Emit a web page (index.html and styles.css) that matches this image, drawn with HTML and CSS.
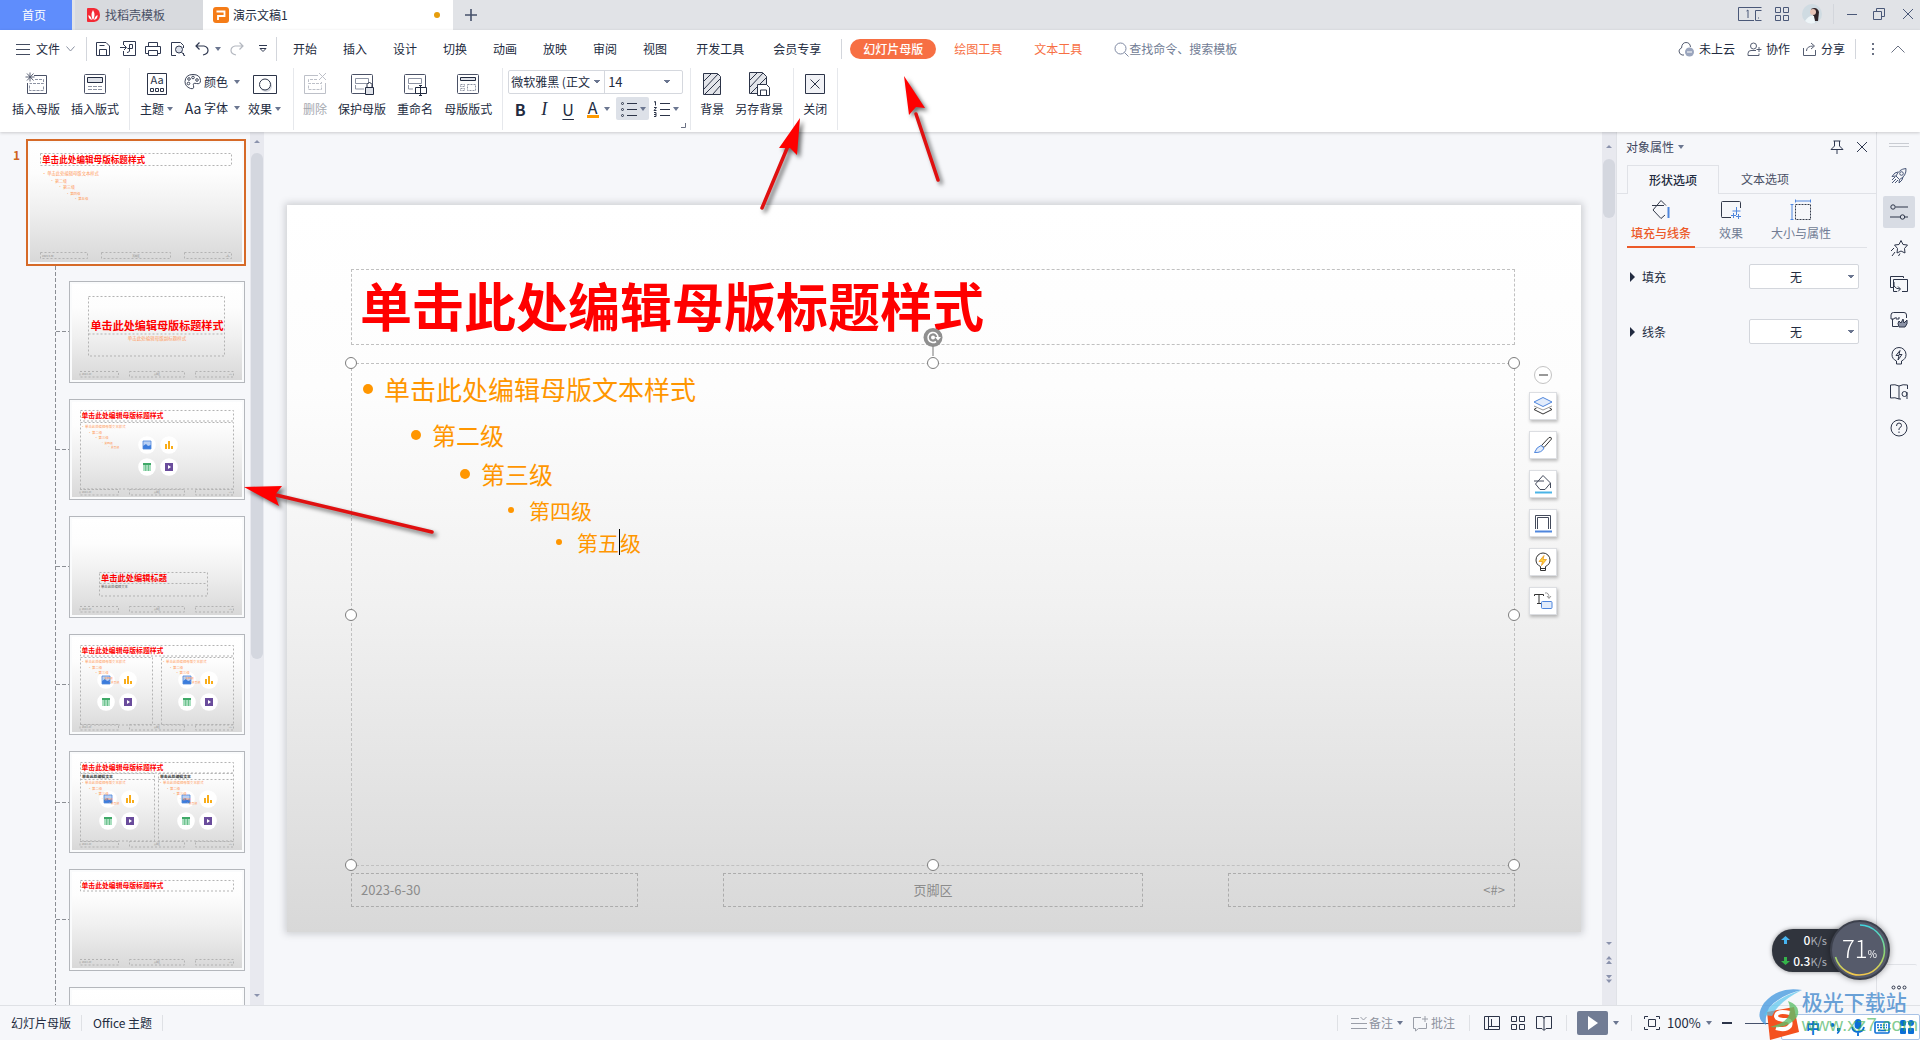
FILE: index.html
```html
<!DOCTYPE html>
<html lang="zh-CN">
<head>
<meta charset="utf-8">
<title>演示文稿1</title>
<link rel="stylesheet" href="styles.css">
</head>
<body>
<svg class="sprite" aria-hidden="true">
  <defs>
    <linearGradient id="paper" x1="0" y1="0" x2="0" y2="1">
      <stop offset="0" stop-color="#fff"/><stop offset=".25" stop-color="#fdfdfd"/><stop offset=".55" stop-color="#f0f0f0"/><stop offset="1" stop-color="#d8d8d8"/>
    </linearGradient>
    <linearGradient id="ring" x1="0" y1="0" x2="0" y2="1">
      <stop offset="0" stop-color="#3fd6e0"/><stop offset=".6" stop-color="#93d76f"/><stop offset="1" stop-color="#f5c84c"/>
    </linearGradient>
    <symbol id="caret" viewBox="0 0 6 4"><path d="M0 0h6L3 4z" fill="#6b7690"/></symbol>
    <symbol id="media" viewBox="0 0 40 40">
      <g fill="#fff"><circle cx="9" cy="9" r="8.800"/><circle cx="31" cy="9" r="8.800"/><circle cx="9" cy="31" r="8.800"/><circle cx="31" cy="31" r="8.800"/></g>
      <path d="M5 5h8v8H5z" fill="#b9d0f3"/><path d="M5 10l3-2 2 2 3-1v4H5z" fill="#3b7cdc"/><path d="M5 5h8v8H5z" fill="none" stroke="#4c86dd" stroke-width=".8"/>
      <path d="M27 8h2v5h-2zM30 5h2v8h-2zM33 10h2v3h-2z" fill="#f9ad18"/>
      <path d="M5 27h8v8H5z" fill="#a9dfbf"/><path d="M5 27h8v2H5zM7.500 29h.6v6h-.6zM10.200 29h.6v6h-.6z" fill="#3fa968"/>
      <path d="M27 27h8v8h-8z" fill="#6a4c9c"/><path d="M30 29l3 2-3 2z" fill="#fff"/>
    </symbol>
    <symbol id="mini-foot" viewBox="0 0 170 96">
      <g class="dash"><path d="M8 87.500h38.500V93H8zM57.500 87.500h55V93h-55zM123.500 87.500h38V93h-38z"/></g>
      <g font-size="2" fill="#888"><text x="10" y="91">2023-6-30</text><text x="85" y="91" text-anchor="middle">页脚区</text><text x="160" y="91" text-anchor="end">&lt;#&gt;</text></g>
    </symbol>
    <symbol id="mini-title" viewBox="0 0 170 96">
      <path class="dash" d="M8.500 8.500h153V19h-153z"/>
      <text class="red" x="9.500" y="16.500" font-size="6.850">单击此处编辑母版标题样式</text>
    </symbol>
    <symbol id="mini-list" viewBox="0 0 80 40">
      <g class="org" font-size="3.400"><text x="1" y="6">• 单击此处编辑母版文本样式</text><text x="8" y="12">• 第二级</text><text x="14.500" y="17">• 第三级</text><text x="21" y="22" font-size="2.800">• 第四级</text><text x="27.500" y="26.500" font-size="2.800">• 第五级</text></g>
    </symbol>
    <symbol id="i-layout" viewBox="0 0 24 24"><rect x="1.500" y="2.500" width="21" height="19" rx="1" fill="#fff" stroke="#4a5166"/></symbol>
  </defs>
</svg>

<header class="tabs">
  <a class="tab tab-home" href="#">首页</a>
  <a class="tab tab-docer" href="#">
    <svg width="14" height="18" viewBox="0 0 14 18"><path d="M1 3q0-1 1-1h6q6 1 6 7t-6 7H2q-1 0-1-1z" fill="#f32a35"/><path d="M7 14Q4 9 7 4q3 5 0 10zM6 14Q2 13 2.500 9 5 10 6 14zM8 14q4-1 3.500-5Q9 10 8 14z" fill="#fff"/></svg>
    找稻壳模板</a>
  <a class="tab tab-doc" href="#">
    <svg width="16" height="16" viewBox="0 0 16 16"><rect width="16" height="16" rx="3" fill="#f57c17"/><path d="M3.500 4.500h8v4.500H5V13" fill="none" stroke="#fff" stroke-width="1.800"/></svg>
    <span>演示文稿1</span><i class="dirty"></i></a>
  <button class="plus" aria-label="新建"><svg width="12" height="12" viewBox="0 0 12 12"><path d="M6 0v12M0 6h12" stroke="#46516b" stroke-width="1.600"/></svg></button>
  <div class="win">
    <svg width="24" height="15" viewBox="0 0 24 15" fill="none" stroke="#4a5878"><path d="M16 13.500H.5v-13h23M8.500 4l1.500-1v8"/><path d="M23.500 3.500h-6v10h6M20 11h1"/></svg>
    <svg width="14" height="14" viewBox="0 0 14 14" fill="none" stroke="#4a5878"><path d="M.5.500h5v5h-5zM8.500.500h5v5h-5zM.5 8.500h5v5h-5zM8.500 8.500h5v5h-5z"/></svg>
    <svg class="avatar" width="20" height="20" viewBox="0 0 20 20"><circle cx="10" cy="10" r="10" fill="#cfdbe2"/><path d="M9 5q6-3 8 3l-1 9h-3z" fill="#302428"/><circle cx="11" cy="8" r="3" fill="#e8c5b8"/><path d="M3 17q4-6 9-5l1 7q-6 2-10-2z" fill="#eef5f8"/></svg>
    <i class="vline"></i>
    <button aria-label="最小化"><svg width="12" height="12" viewBox="0 0 12 12"><path d="M1 6.500h10" stroke="#4a5878"/></svg></button>
    <button aria-label="还原"><svg width="12" height="12" viewBox="0 0 12 12" fill="none" stroke="#4a5878"><path d="M.5 3.500h8v8h-8zM3.500 3V.5h8v8H9"/></svg></button>
    <button aria-label="关闭"><svg width="12" height="12" viewBox="0 0 12 12"><path d="M1 1l10 10M11 1L1 11" stroke="#4a5878"/></svg></button>
  </div>
</header>

<div class="ribbon">
  <div class="menubar">
    <button class="file"><svg width="14" height="12" viewBox="0 0 14 12"><path d="M0 1.500h14M0 6.500h14M0 11.500h14" stroke="#444c60"/></svg>文件<svg class="chev" width="9" height="6" viewBox="0 0 9 6" fill="none" stroke="#8a90a0"><path d="M.5.500l4 4.500 4-4.500"/></svg></button>
    <div class="quick">
      <button aria-label="保存"><svg width="16" height="16" viewBox="0 0 16 16" fill="none" stroke="#2f3850"><path d="M1.500 1.500H11l3.500 3.500v9.500h-13zM4.500 14V8.500h7V14M4.500 4.500h5"/></svg></button>
      <button aria-label="输出为PDF"><svg width="16" height="16" viewBox="0 0 16 16" fill="none" stroke="#2f3850"><path d="M3.500 4V.5h12v14h-12V10M0 6.500h6M4 4l2.500 2.500L4 9M9.500 3.500v6.500q-.5 1.500-2.500 1.500M9.500 3.500h3v4h-5"/></svg></button>
      <button aria-label="打印"><svg width="16" height="16" viewBox="0 0 16 16" fill="none" stroke="#2f3850"><path d="M3.500 5V1.500h9V5M3.500 12.500h-3v-7h15v7h-3M3.500 9.500h9v5h-9z"/></svg></button>
      <button aria-label="打印预览"><svg width="16" height="16" viewBox="0 0 16 16" fill="none" stroke="#2f3850"><path d="M6 14.500H1.500v-13h9l3 3V7M13.500 12v2.500"/><circle cx="9" cy="8.500" r="3.500" fill="#dde1ea"/><path d="M11.500 11l3.500 4"/></svg></button>
      <button class="undo" aria-label="撤销"><svg width="14" height="14" viewBox="0 0 14 14" fill="none" stroke="#2f3850" stroke-width="1.200"><path d="M4.500.500L1 4l3.500 3.500M1 4h8q4 1 4 4.500T8 13"/></svg><svg width="6" height="4"><use href="#caret"/></svg></button>
      <button aria-label="恢复"><svg width="14" height="14" viewBox="0 0 14 14" fill="none" stroke="#b4b8c0" stroke-width="1.200"><path d="M9.500.500L13 4 9.500 7.500M13 4H5Q1 5 1 8.500T6 13"/></svg></button>
      <button class="more" aria-label="更多"><svg width="8" height="8" viewBox="0 0 8 8" fill="none" stroke="#2f3850"><path d="M0 .5h8M1 3.500h6L4 6.500z"/></svg></button>
    </div>
    <nav class="menus">
      <a href="#">开始</a><a href="#">插入</a><a href="#">设计</a><a href="#">切换</a><a href="#">动画</a><a href="#">放映</a><a href="#">审阅</a><a href="#">视图</a><a class="wide" href="#">开发工具</a><a class="wide" href="#">会员专享</a>
    </nav>
    <nav class="context"><a class="pill" href="#">幻灯片母版</a><a href="#">绘图工具</a><a href="#">文本工具</a></nav>
    <label class="search"><svg width="15" height="15" viewBox="0 0 15 15" fill="none" stroke="#7f8aa3"><circle cx="6.500" cy="6.500" r="5.500"/><path d="M10.500 10.500l4 4"/></svg><input type="text" placeholder="查找命令、搜索模板" aria-label="查找命令"></label>
    <div class="share">
      <button><svg width="17" height="16" viewBox="0 0 17 16"><path d="M6 14H4q-3-1-3-4 0-2 2.500-3Q4 1.500 8 1.500T12.500 6" fill="none" stroke="#565e72"/><circle cx="11.500" cy="11" r="4.500" fill="#9aa5bd"/><path d="M9 11h5" stroke="#fff"/></svg>未上云</button>
      <button><svg width="15" height="15" viewBox="0 0 15 15" fill="none" stroke="#565e72"><circle cx="6.500" cy="4" r="3"/><path d="M9 8.500H4q-3 0-3 3v2h11v-2M9.500 7.500h5M12 5v5"/></svg>协作</button>
      <button><svg width="15" height="15" viewBox="0 0 15 15" fill="none" stroke="#565e72"><path d="M1.500 6v7.500h12V8M4.500 9q0-5 7-5M9 1l3.500 3L9 7"/></svg>分享</button>
      <i class="vline"></i>
      <button aria-label="更多"><svg width="4" height="14" viewBox="0 0 4 14" fill="#6a7183"><path d="M1 1h2v2H1zM1 6h2v2H1zM1 11h2v2H1z"/></svg></button>
      <button class="fold" aria-label="收起"><svg width="14" height="8" viewBox="0 0 14 8" fill="none" stroke="#6a7183"><path d="M.5 7.500L7 1l6.500 6.500"/></svg></button>
    </div>
  </div>

  <div class="tools">
    <div class="group first">
      <button class="tool"><svg width="24" height="24" viewBox="0 0 24 24" fill="none" stroke="#4a5166"><path d="M10 3.500h12.500v18h-19V11"/><path d="M6 .5v9M1.500 5h9M3 1.500l6.500 7M9.500 1.500L3 8.500" stroke-width=".9"/><path d="M11 7.500h8.500v4h-14M5.500 13.500v5h14v-5" stroke-dasharray="3 1" stroke="#8d93a3"/></svg>插入母版</button>
      <button class="tool"><svg width="24" height="24" viewBox="0 0 24 24" fill="none" stroke="#4a5166"><use href="#i-layout"/><path d="M4.500 5.500h15v5h-15z" fill="#dfe2e9" stroke="#222b40"/><path d="M5 14.500h14M5 17.500h14" stroke-dasharray="4 1" stroke="#8d93a3"/></svg>插入版式</button>
    </div>
    <div class="group near">
      <button class="tool"><svg width="24" height="24" viewBox="0 0 24 24" fill="none" stroke="#2c3448"><path d="M2.500 1.500h19v21h-19zM5.500 16.500h3v3h-3zM10.500 16.500h3v3h-3zM15.500 16.500h3v3h-3z"/><text x="12" y="12" text-anchor="middle" font-size="11" fill="#2c3448" stroke="none">Aa</text></svg><span>主题<svg width="6" height="4"><use href="#caret"/></svg></span></button>
      <div class="pair">
        <button><svg width="18" height="18" viewBox="0 0 18 18" fill="none" stroke="#3c4458"><path d="M9 1.500q7 0 7.500 6 0 4-4 3t-3 2q1 4-3 3Q1 13.500 1 8.500q.5-7 8-7z"/><circle cx="5" cy="6" r="1.300"/><circle cx="9" cy="4.500" r="1.300"/><circle cx="13" cy="7" r="1.300"/><circle cx="4.500" cy="10.500" r="1.300"/></svg>颜色<svg width="6" height="4"><use href="#caret"/></svg></button>
        <button><b class="aa">Aa</b>字体<svg width="6" height="4"><use href="#caret"/></svg></button>
      </div>
      <button class="tool"><svg width="24" height="24" viewBox="0 0 24 24" fill="none" stroke="#2c3448"><path d="M.5 3.500h23v18H.5z"/><circle cx="13" cy="14" r="6" fill="#d5d8e0" stroke="none"/><circle cx="12" cy="12.500" r="5.500" fill="#fff"/></svg><span>效果<svg width="6" height="4"><use href="#caret"/></svg></span></button>
    </div>
    <div class="group">
      <button class="tool" disabled><svg width="24" height="24" viewBox="0 0 24 24" fill="none" stroke="#bdc0c8"><path d="M15 3.500H1.500v18h21V11M16 1l7 7M23 1l-7 7"/><path d="M14 7.500H5.500v4h13v-2M5.500 13.500v4h13v-4" stroke-dasharray="3 1"/></svg>删除</button>
      <button class="tool"><svg width="24" height="24" viewBox="0 0 24 24" fill="none" stroke="#4a5166"><use href="#i-layout"/><path d="M5.500 6.500h13v5h-13zM5.500 13v4H14" stroke="#8d93a3"/><path d="M15.500 15.500h8v7h-8z" fill="#dfe2e9" stroke="#222b40"/><path d="M17 15v-2.500q2.500-4 5 0V15" stroke="#222b40"/></svg>保护母版</button>
      <button class="tool"><svg width="24" height="24" viewBox="0 0 24 24" fill="none" stroke="#4a5166"><use href="#i-layout"/><path d="M5.500 6.500h13v5h-13zM5.500 13v4H10" stroke="#8d93a3"/><path d="M12.500 15.500h11v6h-11z" fill="#fff" stroke="#222b40"/><path d="M17.500 14v9M16 13.500h3M16 23.500h3" stroke="#222b40"/></svg>重命名</button>
      <button class="tool"><svg width="24" height="24" viewBox="0 0 24 24" fill="none" stroke="#4a5166"><use href="#i-layout"/><path d="M4.500 5.500h15v3h-15z" fill="#dfe2e9" stroke="#222b40"/><path d="M4.500 12.500h4v2h-4zM4.500 16.500h4v2h-4zM11.500 12.500h8v6h-8z" stroke="#8d93a3" stroke-dasharray="2 1"/></svg>母版版式</button>
    </div>
    <div class="group font">
      <div class="combo">
        <select class="family" aria-label="字体"><option>微软雅黑 (正文)</option></select>
        <select class="size" aria-label="字号"><option>14</option></select>
      </div>
      <div class="marks">
        <button class="bold" aria-label="加粗">B</button>
        <button class="ital" aria-label="倾斜">I</button>
        <button class="under" aria-label="下划线">U</button>
        <button class="color"><span>A</span><svg width="6" height="4"><use href="#caret"/></svg></button>
        <button class="list on" aria-label="项目符号"><svg width="18" height="18" viewBox="0 0 18 18" fill="none" stroke="#2c3448"><path d="M7 3.500h10M7 9.500h10M7 15.500h10"/><circle cx="2.500" cy="3.500" r="1"/><circle cx="2.500" cy="9.500" r="1"/><circle cx="2.500" cy="15.500" r="1"/></svg><svg width="6" height="4"><use href="#caret"/></svg></button>
        <button class="list" aria-label="编号"><svg width="18" height="18" viewBox="0 0 18 18" fill="none" stroke="#2c3448"><path d="M7 3.500h10M7 9.500h10M7 15.500h10M1 2l1.500-.5v4M1 7.500h2.500L1 10.500h2.500M1 12.500h2v4H1M1 14.500h2"/></svg><svg width="6" height="4"><use href="#caret"/></svg></button>
      </div>
      <svg class="corner" width="5" height="5" viewBox="0 0 5 5"><path d="M4.500 0v4.500H0" fill="none" stroke="#6a7183"/></svg>
    </div>
    <div class="group">
      <button class="tool"><svg width="20" height="24" viewBox="0 0 20 24" fill="none" stroke="#2c3448"><path d="M1.500 1.500h14l3 3v18h-17z" fill="#e3e5ea"/><path d="M2 9l7-7M2 17L16 2M3 22L18 7M11 22l7-8"/></svg>背景</button>
      <button class="tool"><svg width="24" height="24" viewBox="0 0 24 24" fill="none" stroke="#2c3448"><path d="M2.500.500h13l4 4v17h-17z" fill="#e3e5ea"/><path d="M3 8l7-7M3 15L16 1M4 21L19 6"/><path d="M10.500 12.500h9l3 3v8h-12z" fill="#fff"/><path d="M13.500 23v-5h6v5"/></svg>另存背景</button>
    </div>
    <div class="group">
      <button class="tool"><svg width="22" height="24" viewBox="0 0 22 24" fill="none" stroke="#2c3448"><path d="M1.500 2.500h19v19h-19z" fill="#f1f2f6"/><path d="M6.500 7.500l9 9M15.500 7.500l-9 9"/></svg>关闭</button>
    </div>
  </div>
</div>

<main class="work">
  <aside class="thumbs">
    <div class="master-row">
      <b class="num">1</b>
      <a class="thumb master" href="#"><svg viewBox="0 0 212 119">
        <rect width="212" height="119" fill="url(#paper)"/>
        <path class="dash" d="M10.500 10.500h191v12h-191zM10.500 109.500h47v6h-47zM71.500 109.500h69v6h-69zM154.500 109.500h47v6h-47z"/>
        <text class="red" x="12" y="19.500" font-size="8.600">单击此处编辑母版标题样式</text>
        <g class="org" font-size="4.300"><text x="12" y="32">• 单击此处编辑母版文本样式</text><text x="20" y="39.500" font-size="4">• 第二级</text><text x="28" y="45.500" font-size="4">• 第三级</text><text x="36" y="51.500" font-size="3.400">• 第四级</text><text x="44" y="57" font-size="3.400">• 第五级</text></g>
        <g font-size="2.500" fill="#888"><text x="12" y="113.500">2023-6-30</text><text x="106" y="113.500" text-anchor="middle">页脚区</text><text x="200" y="113.500" text-anchor="end">&lt;#&gt;</text></g>
      </svg></a>
    </div>
    <ol class="layouts">
      <li><a class="thumb" href="#"><svg viewBox="0 0 170 95.600"><rect width="170" height="96" fill="url(#paper)"/>
        <path class="dash" d="M16.500 12.500h136v59.500h-136zM16.500 50h136"/>
        <text class="red" x="85" y="46" font-size="11.100" text-anchor="middle">单击此处编辑母版标题样式</text>
        <text class="org" x="85" y="56.500" font-size="4.500" text-anchor="middle">单击此处编辑母版副标题样式</text>
        <use href="#mini-foot" width="170" height="96"/></svg></a></li>
      <li><a class="thumb" href="#"><svg viewBox="0 0 170 95.600"><rect width="170" height="96" fill="url(#paper)"/>
        <use href="#mini-title" width="170" height="96"/><path class="dash" d="M8.500 20.500h153V87h-153z"/>
        <use href="#mini-list" x="8" y="20" width="80" height="40"/><use href="#media" x="66" y="34" width="40" height="40"/>
        <use href="#mini-foot" width="170" height="96"/></svg></a></li>
      <li><a class="thumb" href="#"><svg viewBox="0 0 170 95.600"><rect width="170" height="96" fill="url(#paper)"/>
        <path class="dash" d="M27.500 53.500h108V77h-108zM27.500 64.500h108"/>
        <text class="red" x="29" y="61.800" font-size="8.250">单击此处编辑标题</text><text x="29" y="69" font-size="3.400" fill="#555">单击此处编辑文本</text>
        <use href="#mini-foot" width="170" height="96"/></svg></a></li>
      <li><a class="thumb" href="#"><svg viewBox="0 0 170 95.600"><rect width="170" height="96" fill="url(#paper)"/>
        <use href="#mini-title" width="170" height="96"/><path class="dash" d="M8.500 20.500h72V88h-72zM89.500 20.500h72V88h-72z"/>
        <use href="#media" x="25" y="34" width="40" height="40"/><use href="#media" x="106" y="34" width="40" height="40"/>
        <use href="#mini-list" x="8" y="20" width="80" height="40"/><use href="#mini-list" x="89" y="20" width="80" height="40"/>
        <use href="#mini-foot" width="170" height="96"/></svg></a></li>
      <li><a class="thumb" href="#"><svg viewBox="0 0 170 95.600"><rect width="170" height="96" fill="url(#paper)"/>
        <use href="#mini-title" width="170" height="96"/><path class="dash" d="M8.500 19.500h74V87h-74zM86.500 19.500h75V87h-75zM8.500 25.500h74M86.500 25.500h75"/>
        <use href="#media" x="27" y="36" width="40" height="40"/><use href="#media" x="105" y="36" width="40" height="40"/>
        <g font-size="3.900" font-weight="700" fill="#333"><text x="10" y="24">单击此处编辑文本</text><text x="88" y="24">单击此处编辑文本</text></g>
        <use href="#mini-list" x="8" y="24" width="80" height="40"/><use href="#mini-list" x="86" y="24" width="80" height="40"/>
        <use href="#mini-foot" width="170" height="96"/></svg></a></li>
      <li><a class="thumb" href="#"><svg viewBox="0 0 170 95.600"><rect width="170" height="96" fill="url(#paper)"/>
        <use href="#mini-title" width="170" height="96"/><use href="#mini-foot" width="170" height="96"/></svg></a></li>
      <li><a class="thumb" href="#"><svg viewBox="0 0 170 95.600"><rect width="170" height="96" fill="url(#paper)"/><use href="#mini-foot" width="170" height="96"/></svg></a></li>
    </ol>
  </aside>
  <div class="bar bar-left"><i class="up"></i><i class="grip"></i><i class="down"></i></div>

  <section class="canvas">
    <article class="slide">
      <h1 class="ph title">单击此处编辑母版标题样式</h1>
      <div class="ph body">
        <ul class="levels">
          <li class="l1">单击此处编辑母版文本样式</li>
          <li class="l2">第二级</li>
          <li class="l3">第三级</li>
          <li class="l4">第四级</li>
          <li class="l5">第五<i class="cursor"></i>级</li>
        </ul>
        <i class="knob nw"></i><i class="knob n"></i><i class="knob ne"></i><i class="knob w"></i><i class="knob e"></i><i class="knob sw"></i><i class="knob s"></i><i class="knob se"></i>
        <svg class="rotate" width="20" height="30" viewBox="0 0 20 30"><path d="M10 18v10" stroke="#777"/><circle cx="10" cy="9.500" r="9.500" fill="#8f8f8f"/><path d="M13 13.500a5 5 0 1 1 2-4" fill="none" stroke="#fff" stroke-width="1.600"/><path d="M12 9h6l-3 3.500z" fill="#fff"/><circle cx="10" cy="9.500" r="2" fill="#fff"/></svg>
      </div>
      <footer class="foot"><div class="ph">2023-6-30</div><div class="ph mid">页脚区</div><div class="ph end">&lt;#&gt;</div></footer>
      <div class="floaters">
        <button class="minus" aria-label="收起"></button>
        <button class="fl" aria-label="图层"><svg width="20" height="20" viewBox="0 0 20 20" fill="none"><path d="M1 13.500L10 18l9-4.500-2.500-1.500M1 13.500L3.500 12" stroke="#333"/><path d="M1 10l9 4 9-4" stroke="#999"/><path d="M1 6l9-4.500L19 6l-9 4.500z" fill="#e2ecfb" stroke="#4f86dd"/></svg></button>
        <button class="fl" aria-label="画笔"><svg width="20" height="20" viewBox="0 0 20 20" fill="none"><path d="M8.500 10.500L16 2.500q2.500-1 2.500 1.500L11 12.500z" stroke="#333"/><path d="M8 10.500l3 2.500q-2 5-9.500 4.500 2-5.500 6.500-7z" fill="#e2ecfb" stroke="#4f86dd"/></svg></button>
        <button class="fl" aria-label="填充"><svg width="20" height="20" viewBox="0 0 20 20" fill="none" stroke="#444b5c"><path d="M1 7h10M7 15.500L2.500 10 10 1.500 17.500 9 12 15.500zM17.500 9v5"/><path d="M2 18.500h17" stroke="#4bb4e6" stroke-width="2"/></svg></button>
        <button class="fl" aria-label="轮廓"><svg width="20" height="20" viewBox="0 0 20 20" fill="none" stroke="#444b5c"><path d="M2.500 16V2.500h15V16M4.500 16V4.500h11V16"/><path d="M2 18.500h17" stroke="#4f86dd" stroke-width="2"/></svg></button>
        <button class="fl" aria-label="智能"><svg width="20" height="20" viewBox="0 0 20 20" fill="none" stroke="#333"><path d="M7.500 14.500q-4.500-2-4.500-6.500a7 7 0 0 1 14 0q0 4.500-4.500 6.500v4h-5zM7.500 16.500h5"/><path d="M11 3.500l-5 6h3.500l-1 4 5-6H10z" fill="#ffd33c" stroke="#ec9a1c" stroke-width=".8"/></svg></button>
        <button class="fl" aria-label="转换"><svg width="20" height="20" viewBox="0 0 20 20" fill="none"><path d="M1.500 5V3.500h9V5M6 3.500v9M4 12.500h4" stroke="#333"/><path d="M12 2q4-1 4 5M14 5l2 2.500L18 5" stroke="#999"/><rect x="8.500" y="10.500" width="10.500" height="7" rx="1" fill="#e2ecfb" stroke="#4f86dd"/></svg></button>
      </div>
    </article>
  </section>
  <div class="bar bar-right"><i class="up"></i><i class="grip"></i><i class="down"></i><svg width="6" height="8" viewBox="0 0 6 8" fill="#8b93ad"><path d="M0 3.500h6L3 0zM0 8h6L3 4.500z"/></svg><svg width="6" height="8" viewBox="0 0 6 8" fill="#8b93ad"><path d="M0 0h6L3 3.500zM0 4.500h6L3 8z"/></svg></div>

  <aside class="props">
    <div class="props-head"><button>对象属性<svg width="6" height="4"><use href="#caret"/></svg></button>
      <span class="gap"></span>
      <button aria-label="固定"><svg width="14" height="14" viewBox="0 0 14 14" fill="none" stroke="#2f3850"><path d="M3.500 1h7M4.500 1v5L1 9.500h12L9.500 6V1M7 10v4"/></svg></button>
      <button aria-label="关闭"><svg width="12" height="12" viewBox="0 0 12 12"><path d="M1 1l10 10M11 1L1 11" stroke="#2f3850"/></svg></button></div>
    <div class="props-tabs"><button class="on">形状选项</button><button>文本选项</button></div>
    <div class="subtabs">
      <button class="on"><svg width="22" height="22" viewBox="0 0 22 22" fill="none" stroke="#333a4a"><path d="M15 16l-4 3.500L3 11 11 1.500l5 5M2 6.500h12"/><path d="M18.500 8v11" stroke="#4f86dd" stroke-width="2"/></svg>填充与线条</button>
      <button><svg width="22" height="22" viewBox="0 0 22 22" fill="none" stroke="#333a4a"><path d="M11 18.500H2q-.5 0-.5-1v-14q0-1 1-1h17q1 0 1 1V9"/><path d="M16.500 8v8M12.500 12h8M13.500 14v5M11 16.500h5M18.500 15v5M16 17.500h5" stroke="#4f86dd"/></svg>效果</button>
      <button><svg width="22" height="22" viewBox="0 0 22 22" fill="none" stroke="#333a4a"><path d="M5.500 5.500h15v15h-15z" stroke-dasharray="2 1"/><path d="M5 2h16M5.500.500v3M20.500.500v3M2 5.500v15M.5 5.500h3M.5 20.500h3" stroke="#4f86dd"/></svg>大小与属性</button>
    </div>
    <div class="prop-row"><label for="fill"><i class="tri"></i>填充</label><select id="fill"><option>无</option></select></div>
    <div class="prop-row"><label for="line"><i class="tri"></i>线条</label><select id="line"><option>无</option></select></div>
  </aside>

  <nav class="rail">
    <i class="rail-grip"></i>
    <button aria-label="快捷"><svg width="18" height="18" viewBox="0 0 18 18" fill="none" stroke="#4a5878"><path d="M6 9Q9 2 16 1.500 16.500 9 9.500 12.500zM6 9l-4 .5L5 6l3-1M9.500 12.500L9 16l3-3 1-3M5 10l-3 3M6 12l-4 4M8 13l-3 3"/><circle cx="11.500" cy="6.500" r="1.800"/></svg></button>
    <button class="on" aria-label="属性"><svg width="18" height="18" viewBox="0 0 18 18" fill="none" stroke="#2c3448"><path d="M5.500 4H18M0 14h10M15 14h3"/><circle cx="3" cy="4" r="2.200"/><circle cx="12.500" cy="14" r="2.200"/></svg></button>
    <button aria-label="动画"><svg width="18" height="18" viewBox="0 0 18 18" fill="none" stroke="#2c3448"><path d="M11 1.500l2 4 4.500.5-3 3.500.5 4.500-4-2-4 2 .5-4.500-3-3.500 4.500-.5zM4 9l-3 3M5 13l-3 4M10 14.500L8.500 17"/></svg></button>
    <button aria-label="切换"><svg width="18" height="18" viewBox="0 0 18 18" fill="none" stroke="#2c3448"><path d="M3 12.500H.5v-11h13V3M7 16.500H3.500v-12h14v12H12M4 7v4q2 3 6 3M8 11.500l2.500 2.500L8 16.500"/></svg></button>
    <button aria-label="素材"><svg width="18" height="18" viewBox="0 0 18 18" fill="none" stroke="#2c3448"><path d="M8 15.500H2.500V8M16.500 7V4q0-2.500-2.500-2.500H3.500Q1 1.500 1 4v4h3l1-1.500M6 6v2h3V6"/><path d="M9 16q-2-4 0-6l2 2 2-4 1 4 3-3q1 4-2 7z" fill="#8b92a5"/></svg></button>
    <button aria-label="智能"><svg width="18" height="18" viewBox="0 0 18 18" fill="none" stroke="#2c3448"><path d="M6.500 14Q2 12 2 7.500a7 7 0 0 1 14 0q0 4.500-4.500 6.500v3h-5zM10 3.500L6 8.500h3L8 13l4-5.500H9z"/></svg></button>
    <button aria-label="资料"><svg width="18" height="18" viewBox="0 0 18 18" fill="none" stroke="#2c3448"><path d="M9 16q-4-2-8.500-1V2Q5 1 9 3q4-2 8.500-1v4M9 3v13h2"/><circle cx="14.500" cy="11" r="2.500"/><path d="M17 9v7"/></svg></button>
    <button aria-label="帮助"><svg width="18" height="18" viewBox="0 0 18 18" fill="none" stroke="#2c3448"><circle cx="9" cy="9" r="8"/><path d="M6.500 7q0-3 2.500-3t2.500 2.500Q11.500 8 9 9.500V11M9 12.500v1.500"/></svg></button>
    <span class="gap"></span>
    <button class="dots" aria-label="更多"><svg width="16" height="5" viewBox="0 0 16 5" fill="none" stroke="#2c3448"><circle cx="2.500" cy="2.500" r="1.500"/><circle cx="8" cy="2.500" r="1.500"/><circle cx="13.500" cy="2.500" r="1.500"/></svg></button>
  </nav>
</main>

<footer class="status">
  <span class="cell">幻灯片母版</span><span class="cell">Office 主题</span>
  <span class="gap"></span>
  <div class="seg dim">
    <button><svg width="16" height="14" viewBox="0 0 16 14" fill="none" stroke="#9a9ea8"><path d="M0 2.500h8M0 7.500h16M0 12.500h16M9.500 1l3 3 3-3"/></svg>备注<svg width="6" height="4"><use href="#caret"/></svg></button>
    <button><svg width="17" height="17" viewBox="0 0 17 17" fill="none" stroke="#9a9ea8"><path d="M9 2.500H1.500v11h2v2.500l3-2.500h8V8M13 1v6M10 4h6"/></svg>批注</button>
  </div>
  <div class="seg views">
    <button aria-label="普通"><svg width="16" height="16" viewBox="0 0 16 16" fill="none" stroke="#2c3448"><path d="M.5 1.500h15v13H.5zM4.500 1.500v13M4.500 11.500h11M7.500 4v7"/></svg></button>
    <button aria-label="浏览"><svg width="16" height="16" viewBox="0 0 16 16" fill="none" stroke="#2c3448"><path d="M1.500 1.500h5v5h-5zM9.500 1.500h5v5h-5zM1.500 9.500h5v5h-5zM9.500 9.500h5v5h-5z"/></svg></button>
    <button aria-label="阅读"><svg width="16" height="16" viewBox="0 0 16 16" fill="none" stroke="#2c3448"><path d="M8 3v12M.5 1.500H6q2 0 2 2 0-2 2-2h5.500v12H10L8 15.500 6 13.500H.5z"/></svg></button>
  </div>
  <div class="seg play-seg">
    <button class="play" aria-label="播放"><svg width="10" height="14" viewBox="0 0 10 14"><path d="M0 0l10 7-10 7z" fill="#fff"/></svg></button><svg width="6" height="4"><use href="#caret"/></svg>
  </div>
  <div class="seg zoom">
    <svg width="16" height="16" viewBox="0 0 16 16" fill="none" stroke="#2c3448"><path d="M.5 4V1.500H4M12 1.500h3.500V4M15.500 12v2.500H12M4 14.500H.5V12M4.500 4.500h7v7h-7z"/></svg>
    <span>100%</span><svg width="6" height="4"><use href="#caret"/></svg>
    <button class="out" aria-label="缩小"></button><input type="range" aria-label="缩放" value="50">
  </div>
</footer>

<svg class="arrow a1" width="60" height="120" viewBox="0 0 60 120"><path d="M42 110L20 44" stroke="#e01010" stroke-width="3.500" stroke-linecap="round"/><path d="M8 6l21 32-9-1-7 8z" fill="#f00"/></svg>
<svg class="arrow a2" width="60" height="110" viewBox="0 0 60 110"><path d="M11 98l26-62" stroke="#e01010" stroke-width="3.500" stroke-linecap="round"/><path d="M49 8l-3 37-7-7-11 0z" fill="#f00"/></svg>
<svg class="arrow a3" width="210" height="70" viewBox="0 0 210 70"><path d="M192 53L36 16" stroke="#e01010" stroke-width="3.500" stroke-linecap="round"/><path d="M4 8l38-1-7 9 4 11z" fill="#f00"/></svg>

<div class="net">
  <div class="rates">
    <div><svg width="9" height="8" viewBox="0 0 9 8" fill="#46b4f0"><path d="M4.500 0L9 4H6v4H3V4H0z"/></svg><span><b>0</b>K/s</span></div>
    <div><svg width="9" height="8" viewBox="0 0 9 8" fill="#35b34a"><path d="M4.500 8L9 4H6V0H3v4H0z"/></svg><span><b>0.3</b>K/s</span></div>
  </div>
  <div class="gauge"><svg width="60" height="60" viewBox="0 0 60 60"><circle cx="30" cy="30" r="29" fill="#565b6b" stroke="#3d414d" stroke-width="2"/><path d="M30 5a25 25 0 1 1-24.500 32" fill="none" stroke="url(#ring)" stroke-width="1.600"/></svg><span>71<small>%</small></span></div>
</div>

<div class="ime"><span>中</span>
  <svg width="11" height="13" viewBox="0 0 11 13" fill="#0b6fd6"><circle cx="2.500" cy="4" r="2"/><path d="M7 7h3.500q0 4-3 6l-.8-1q1-1 1-2H7z"/></svg>
  <svg width="14" height="17" viewBox="0 0 14 17" fill="none" stroke="#0b6fd6" stroke-width="1.800"><rect x="4.500" y="1" width="5" height="8" rx="2.500" fill="#0b6fd6"/><path d="M1 8q1 5 6 5t6-5M7 13v4"/></svg>
  <svg width="16" height="13" viewBox="0 0 16 13" fill="none" stroke="#0b6fd6" stroke-width="1.600"><rect x="1" y="1" width="14" height="11" rx="1"/><path d="M3 4h10M3 6.500h10" stroke-dasharray="2 1"/><path d="M4 9.500h8"/></svg>
  <svg width="14" height="14" viewBox="0 0 14 14" fill="#0b6fd6"><rect width="6" height="6" rx="2"/><circle cx="11" cy="3" r="3"/><rect y="8" width="6" height="6" rx="1"/><rect x="8" y="8" width="6" height="6" rx="1"/></svg>
</div>
<div class="mark">
  <svg width="46" height="52" viewBox="0 0 46 52"><path d="M9 24l27-5 5 25-29 8z" fill="#f4511e"/><path d="M32 25q-13-3-14 3 0 4 11 4 5 1 3 6-4 5-14 2" fill="none" stroke="#fff" stroke-width="4"/><path d="M44 2Q20-2 6 15-4 30 8 37 6 20 20 12 30 5 44 2z" fill="#4a9be0" fill-opacity=".8"/><path d="M6 27Q16 10 44 2 20 14 14 28z" fill="#57c4ee" fill-opacity=".7"/><path d="M30 13q14 5 9 16-9 12-27 10 16-4 19-12 2-8-1-14z" fill="#5fbf6b" fill-opacity=".8"/></svg>
  <div><p class="m1">极光下载站</p><p class="m2">www.xz7.com</p></div>
</div>
</body>
</html>
```

FILE: styles.css
```css
* { box-sizing: border-box; }
body {
  margin: 0; height: 100vh; overflow: hidden; position: relative;
  display: flex; flex-direction: column;
  font: 12px/16px "Noto Sans CJK SC", sans-serif; color: #222b40; background: #f6f7fa;
}
button { border: 0; padding: 0; background: none; font: inherit; color: inherit; display: flex; align-items: center; }
a { color: inherit; text-decoration: none; }
i, em { font-style: normal; }
svg { display: block; flex: none; }
select { appearance: none; font: inherit; color: inherit; border: 0; background: none; }
input { font: inherit; }
p, h1, ul, ol { margin: 0; padding: 0; }
.sprite { position: absolute; width: 0; height: 0; }
.gap { flex: 1; }
.vline { width: 1px; height: 20px; background: #d3d6dc; }

/* document tabs */
.tabs { height: 30px; flex: none; display: flex; align-items: stretch; background: #e1e3e7; }
.tab { display: flex; align-items: center; padding-bottom: 1px; }
.tab-home { width: 72px; padding-left: 22px; background: #5f8dfc; color: #fff; }
.tab-docer { width: 128px; margin-left: 3px; padding-left: 11px; gap: 5px; background: #d8dade; color: #4a5166; }
.tab-doc { width: 250px; padding: 0 13px 1px 10px; gap: 4px; background: #fff; }
.dirty { width: 6px; height: 6px; border-radius: 50%; background: #e69d0c; margin-left: auto; }
.plus { margin-left: 12px; }
.win { margin-left: auto; display: flex; align-items: center; gap: 15px; padding: 0 7px 2px 0; }
.win svg:first-child { margin-right: -2px; }
.win .vline { margin: 0 -4px; }
.win button { padding: 0 1px; }
.win button:last-child { margin-left: 2px; }
.win .avatar { margin-left: -2px; }

/* ribbon */
.ribbon { flex: none; background: #fff; position: relative; z-index: 2; box-shadow: 0 1px 3px rgba(0,0,0,.18); height: 102px; }
.menubar { display: flex; align-items: center; height: 38px; }
.file { gap: 6px; padding-left: 16px; width: 87px; border-right: 1px solid #d3d6dc; height: 24px; }
.quick { display: flex; align-items: center; gap: 9px; padding-left: 8px; width: 190px; height: 24px; border-right: 1px solid #d3d6dc; }
.quick .undo { gap: 6px; }
.quick .more { margin-left: 6px; }
.menus { display: flex; gap: 26px; padding-left: 16px; white-space: nowrap; }
.menus .wide { margin-left: 3px; }
.context { display: flex; align-items: center; margin-left: 20px; border-left: 1px solid #d3d6dc; padding-left: 8px; color: #f76f43; white-space: nowrap; }
.context a { margin-right: 32px; }
.context .pill { background: #f76f43; color: #fff; border-radius: 10px; padding: 2px 13px; margin-right: 18px; font-weight: 500; }
.search { display: flex; align-items: center; }
.search input { border: 0; padding: 0; width: 130px; background: none; outline: 0; }
.search input::placeholder { color: #717c94; opacity: 1; }
.share { margin-left: auto; display: flex; align-items: center; gap: 12px; padding-right: 15px; white-space: nowrap; }
.share button { gap: 4px; }
.share .vline { margin: 0 3px 0 -2px; }
.share .fold { margin-left: 4px; }
.tools { display: flex; height: 62px; white-space: nowrap; }
.group { display: flex; gap: 11px; padding: 4px 10px 0 9px; border-right: 1px solid #e6e8ec; }
.group.first { padding-left: 12px; }
.group.near { gap: 8px; padding-left: 10px; padding-right: 12px; }
.tool { flex-direction: column; gap: 5px; height: 46px; }
.tool:disabled { color: #a5a8b0; }
.tool span { display: flex; align-items: center; gap: 3px; }
.pair { display: flex; flex-direction: column; gap: 8px; padding: 1px 0 0 3px; }
.pair button { gap: 2px; height: 18px; }
.pair svg:last-child { margin-left: 4px; }
.aa { font-weight: 400; font-size: 14px; width: 18px; }
.group.font { display: flex; flex-direction: column; gap: 3px; padding: 2px 7px 0 5px; position: relative; }
.combo { display: flex; width: 175px; height: 24px; border: 1px solid #d5d8de; border-radius: 2px; }
.combo select, .prop-row select {
  background: linear-gradient(to bottom right, #6b7690 50%, transparent 50%) no-repeat, linear-gradient(to bottom left, #6b7690 50%, transparent 50%) no-repeat;
  background-size: 3px 4px;
}
.combo .family { width: 96px; padding: 0 14px 0 2px; border-right: 1px solid #d5d8de; background-position: right 4px center, right 7px center; }
.combo .size { flex: 1; padding: 0 3px; font-size: 13px; background-position: right 12px center, right 15px center; }
.marks { display: flex; align-items: center; height: 23px; font-size: 16px; }
.marks button { width: 24px; height: 23px; justify-content: center; }
.marks .bold { font-weight: 700; }
.marks .ital { font-family: "Liberation Serif", serif; font-style: italic; font-size: 18px; }
.marks .under { text-decoration: underline; text-underline-offset: 3px; }
.marks .color { width: 36px; gap: 5px; }
.color span { border-bottom: 3px solid #ff9b00; line-height: 15px; padding: 0 1px; }
.marks .list { width: 33px; gap: 2px; border-radius: 2px; }
.marks .on { background: #dde1e8; }
.corner { position: absolute; right: 4px; bottom: 2px; }

/* work area */
.work { flex: 1; min-height: 0; display: flex; }
.thumbs { width: 250px; flex: none; padding-top: 7px; overflow: hidden; }
.master-row { display: flex; padding-right: 4px; }
.num { width: 26px; padding: 8px 0 0 13px; color: #d0641c; flex: none; }
.thumb { display: block; border: 1px solid #b4b7bc; padding: 2px; background: #fafbfc; }
.thumb svg { width: 100%; height: auto; }
.master { flex: 1; border: 2px solid #d66a28; }
.layouts { list-style: none; padding-top: 15px; display: flex; flex-direction: column; background: repeating-linear-gradient(#8b8e94 0 4px, transparent 4px 6px) 55px 0 / 1px 100% no-repeat; }
.layouts li { padding: 0 5px 0 69px; margin-bottom: 16px; background: repeating-linear-gradient(90deg, #8b8e94 0 4px, transparent 4px 6px) 56px 50% / 13px 1px no-repeat; }
.dash { fill: none; stroke: #b3b3b3; stroke-width: 1; stroke-dasharray: 2 2; }
.red { fill: #f00; font-weight: 700; }
.org { fill: #ff9a5c; }
.bar { width: 14px; flex: none; background: #e8e9ef; display: flex; flex-direction: column; align-items: center; padding: 8px 0; }
.bar .up, .bar .down { border: 3px solid transparent; }
.bar .up { border-bottom-color: #8b93ad; border-top: 0; }
.bar .down { border-top-color: #8b93ad; border-bottom: 0; margin-top: auto; }
.grip { width: 12px; border-radius: 6px; background: #d4d7df; margin-top: 10px; }
.bar-left .grip { height: 59%; }
.bar-right { padding: 13px 0 22px; gap: 11px; }
.bar-right .grip { height: 59px; margin-top: 0; }
.canvas { flex: 1; min-width: 0; display: flex; align-items: center; padding: 0 21px 0 23px; }
.slide {
  flex: 1; min-width: 0; aspect-ratio: 16 / 9; position: relative; display: flex; flex-direction: column;
  padding: 64px 66px 25px 64px;
  background: linear-gradient(#fff 0, #fdfdfd 25%, #f1f1f1 55%, #d8d8d8 100%);
  box-shadow: 0 0 7px 2px rgba(60,64,72,.22);
}
.ph { border: 1px dashed #c0c0c0; }
.title { height: 76px; line-height: 70px; padding-left: 8px; font-size: 52px; font-weight: 700; color: #f00; white-space: nowrap; }
.body { flex: 1; margin: 18px 0 7px; position: relative; padding-top: 5px; }
.levels { list-style: none; color: #ff9600; white-space: nowrap; }
.levels li { display: flex; align-items: center; }
.levels li::before { content: ""; border-radius: 50%; background: #ff9600; flex: none; width: 10px; height: 10px; margin-right: 11px; }
.levels .l1 { font-size: 26px; height: 40px; padding-left: 11px; margin-bottom: 6px; }
.levels .l2 { font-size: 24px; height: 40px; padding-left: 59px; }
.levels .l3 { font-size: 24px; height: 38px; padding-left: 108px; }
.levels .l4 { font-size: 21px; height: 34px; padding-left: 156px; }
.levels .l5 { font-size: 21px; height: 30px; padding-left: 204px; }
.levels .l4::before, .levels .l5::before { width: 6px; height: 6px; margin-right: 15px; }
.cursor { width: 1px; height: 26px; background: #000; }
.knob { position: absolute; width: 12px; height: 12px; margin: -6px; border: 1px solid #7d7d7d; border-radius: 50%; background: #fff; }
.nw, .n, .ne { top: -1px; }
.w, .e { top: 50%; }
.sw, .s, .se { top: 100%; }
.nw, .w, .sw { left: -1px; }
.n, .s { left: 50%; }
.ne, .e, .se { left: 100%; }
.rotate { position: absolute; left: 50%; top: -36px; margin-left: -10px; }
.foot { display: grid; grid-template-columns: 286fr 419fr 286fr; column-gap: 85px; color: #8c8c8c; font-size: 13px; line-height: 32px; }
.foot .ph { padding: 0 9px; border-color: #acacac; }
.foot .mid { text-align: center; }
.foot .end { text-align: right; }
.floaters { position: absolute; right: 24px; top: 161px; display: flex; flex-direction: column; align-items: center; gap: 11px; }
.minus { width: 18px; height: 18px; border: 1px solid #c3c3c3; border-radius: 50%; background: linear-gradient(#999, #999) center / 9px 2px no-repeat #fff; margin-bottom: -3px; }
.fl { width: 28px; height: 28px; justify-content: center; background: #fff; border: 1px solid #dcdee2; box-shadow: 1px 2px 3px rgba(0,0,0,.25); }

/* property pane */
.props { width: 261px; flex: none; border-left: 1px solid #e0e2e7; border-right: 1px solid #e0e2e7; }
.props-head { display: flex; align-items: center; height: 33px; padding: 0 8px 4px 9px; gap: 12px; color: #3f4860; }
.props-head button { gap: 4px; }
.props-tabs { display: flex; border-bottom: 1px solid #e0e2e7; padding-left: 10px; height: 29px; }
.props-tabs button { width: 92px; justify-content: center; color: #4a5166; }
.props-tabs .on { border: 1px solid #e0e2e7; border-bottom: 0; background: #f6f7fa; height: 29px; font-weight: 500; color: #222b40; }
.subtabs { display: flex; margin: 0 9px 0 10px; border-bottom: 1px solid #e0e2e7; height: 54px; color: #717c94; }
.subtabs button { flex-direction: column; gap: 4px; padding: 5px 4px 0; height: 54px; margin-right: 20px; }
.subtabs .on { color: #ec5a29; font-weight: 500; border-bottom: 2px solid #ec5a29; }
.subtabs button + button { margin-right: 20px; }
.prop-row { display: flex; align-items: center; justify-content: space-between; padding: 0 17px 0 13px; margin-top: 16px; }
.prop-row + .prop-row { margin-top: 30px; }
.prop-row label { display: flex; align-items: center; gap: 7px; }
.tri { border: 5px solid transparent; border-left-color: #222b40; border-right: 0; }
.prop-row select { width: 110px; height: 25px; border: 1px solid #d3d6dc; border-radius: 2px; background-color: #fff; padding: 0 16px 0 0; text-align-last: center; background-position: right 4px center, right 7px center; }
.rail { width: 43px; flex: none; display: flex; flex-direction: column; align-items: center; padding-bottom: 16px; }
.rail button { width: 32px; height: 32px; justify-content: center; margin-bottom: 4px; border-radius: 2px; }
.rail .on { background: #d8dce4; }
.rail-grip { width: 20px; height: 4px; border: solid #c9ccd2; border-width: 1px 0; margin: 11px 0 13px; }
.rail .dots { width: 36px; height: 25px; margin: 0; padding-top: 20px; border-top: 1px solid #e0e2e7; }

/* status bar */
.status { height: 35px; flex: none; border-top: 1px solid #dfe1e5; display: flex; align-items: center; white-space: nowrap; padding-left: 1px; }
.cell { padding: 0 10px; border-right: 1px solid #dfe1e5; }
.cell + .cell { padding-left: 11px; }
.seg { display: flex; align-items: center; height: 16px; border-left: 1px solid #dfe1e5; }
.dim { width: 132px; padding-left: 13px; gap: 9px; color: #8d929e; }
.dim button { gap: 2px; }
.dim button svg:last-child:not(:first-child) { margin-left: 2px; }
.views { width: 97px; padding-left: 14px; gap: 10px; }
.play-seg { width: 65px; padding-left: 10px; gap: 5px; }
.play { width: 31px; height: 24px; background: #717c94; border-radius: 2px; justify-content: center; }
.zoom { width: 289px; padding-left: 12px; gap: 7px; }
.zoom span { font-size: 13px; width: 32px; }
.out { width: 10px; height: 2px; background: #2c3448; margin: 0 6px 0 3px; }
.zoom input { appearance: none; width: 120px; height: 1px; margin: 0; background: #46516b; }
.zoom input::-webkit-slider-thumb { appearance: none; width: 6px; height: 10px; background: #46516b; }

/* annotations and desktop overlays */
.arrow { position: absolute; z-index: 5; fill: none; filter: drop-shadow(3px 3px 2px rgba(0,0,0,.55)); }
.a1 { left: 896px; top: 70px; }
.a2 { left: 751px; top: 110px; }
.a3 { left: 240px; top: 479px; }
.net { position: absolute; z-index: 6; right: 30px; bottom: 60px; display: flex; align-items: center; }
.rates { width: 86px; height: 43px; border-radius: 21px 0 0 21px; background: #30343d; color: #a9adb6; padding: 1px 31px 0 9px; margin-right: -28px; font-size: 11px; white-space: nowrap; box-shadow: 0 0 4px rgba(0,0,0,.4); }
.rates div { display: flex; align-items: center; justify-content: space-between; height: 21px; }
.rates b { font-weight: 500; font-size: 12px; color: #fff; }
.gauge { position: relative; filter: drop-shadow(0 0 3px rgba(0,0,0,.4)); }
.gauge span { position: absolute; inset: 0; padding-left: 12px; font: 300 24px/56px "Noto Sans CJK SC", sans-serif; color: #fff; white-space: nowrap; }
.gauge small { font-size: 10px; font-weight: 400; }
.ime { position: absolute; z-index: 6; right: 0; bottom: 0; width: 139px; height: 26px; border: 1px solid #a9c3e6; border-radius: 2px; background: #fff; display: flex; align-items: center; justify-content: space-between; padding: 0 5px 0 24px; color: #0b6fd6; font-weight: 700; font-size: 14px; }
.mark { position: absolute; z-index: 7; right: 2px; bottom: 0; display: flex; align-items: flex-end; white-space: nowrap; }
.mark svg { margin-right: -2px; }
.mark div { padding-bottom: 4px; }
.m1 { font-size: 21px; line-height: 26px; font-weight: 500; color: rgba(66,136,205,.8); }
.m2 { font: 19px/22px "Liberation Sans", sans-serif; color: rgba(60,175,85,.65); }
```
